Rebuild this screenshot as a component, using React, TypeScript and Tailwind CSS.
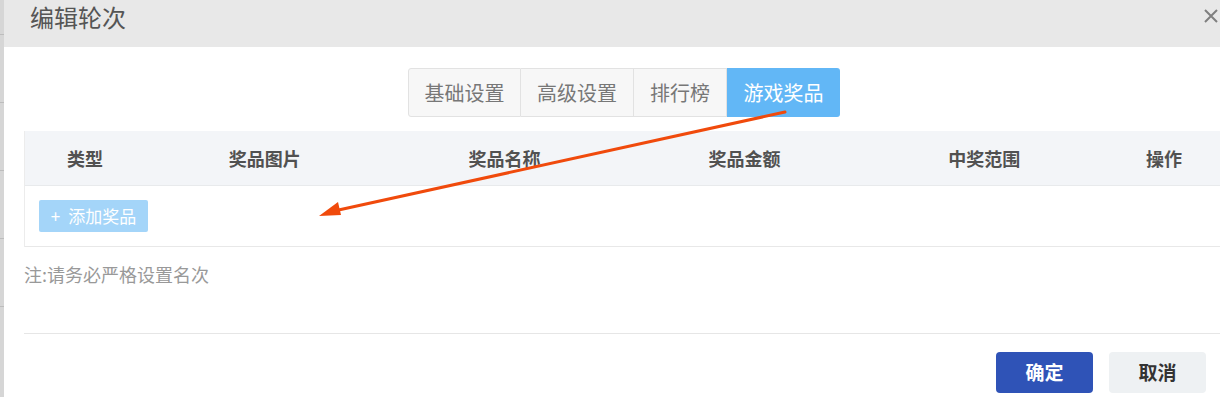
import React from "react";

const cols = [
  { label: "类型", w: "w-[120px]" },
  { label: "奖品图片", w: "w-[240px]" },
  { label: "奖品名称", w: "w-[240px]" },
  { label: "奖品金额", w: "w-[240px]" },
  { label: "中奖范围", w: "w-[240px]" },
  { label: "操作", w: "w-[120px]" },
];

export default function App() {
  return (
    <div
      className="relative flex h-[397px] w-[1220px] overflow-hidden bg-white"
      style={{ fontFamily: '"Noto Sans CJK SC", "Noto Sans", sans-serif' }}
    >
      <div className="flex w-[4px] shrink-0 flex-col bg-[#d6d6d6]">
        <div className="h-[34px]" />
        <div className="h-px bg-[#bdbdbd]" />
        <div className="h-[67px]" />
        <div className="h-px bg-[#bdbdbd]" />
        <div className="h-[67px]" />
        <div className="h-px bg-[#bdbdbd]" />
        <div className="h-[67px]" />
        <div className="h-px bg-[#bdbdbd]" />
        <div className="h-[67px]" />
        <div className="h-px bg-[#bdbdbd]" />
      </div>
      <div className="flex min-w-0 flex-1 flex-col">
        <div className="flex h-[47px] shrink-0 items-start justify-between bg-[#e8e8e8] pl-[26px] pr-[2px] pt-[3px]">
          <span className="text-[24px] leading-[28px] text-[#555]">编辑轮次</span>
          <svg width="14" height="14" viewBox="0 0 14 14" className="mt-[6px]">
            <path d="M1 1 L13 13 M13 1 L1 13" stroke="#7f7f7f" strokeWidth="2" />
          </svg>
        </div>
        <div className="flex justify-center pt-[21px] pl-[24px]">
          <div className="flex h-[49px] text-[20px] text-[#777]">
            <div className="flex w-[113px] items-center justify-center rounded-l-[3px] border border-[#e2e2e2] bg-[#f7f7f7]">基础设置</div>
            <div className="flex w-[113px] items-center justify-center border border-l-0 border-[#e2e2e2] bg-[#f7f7f7]">高级设置</div>
            <div className="flex w-[93px] items-center justify-center border border-l-0 border-[#e2e2e2] bg-[#f7f7f7]">排行榜</div>
            <div className="flex w-[113px] items-center justify-center rounded-r-[3px] bg-[#62b7f6] text-white">游戏奖品</div>
          </div>
        </div>
        <div className="ml-[20px] mt-[14px] w-[1200px] border-l border-[#ececec]">
          <div className="flex h-[55px] items-center border-b border-[#e8eaec] bg-[#f3f5f8]">
            {cols.map((c) => (
              <div key={c.label} className={`${c.w} text-center text-[18px] font-bold text-[#515151]`}>
                {c.label}
              </div>
            ))}
          </div>
          <div className="flex h-[61px] items-center border-b border-[#e8e8e8] pl-[14px]">
            <div className="flex h-[32px] w-[109px] items-center justify-center gap-[8px] rounded-[2px] bg-[#a4d5f9] text-[17px] text-white">
              <span>+</span>
              <span>添加奖品</span>
            </div>
          </div>
        </div>
        <div className="ml-[20px] mt-[14px] text-[18px] text-[#999]">注:请务必严格设置名次</div>
        <div className="ml-[20px] mt-[45px] h-px bg-[#e6e6e6]" />
        <div className="flex justify-end gap-[16px] pr-[14px] pt-[18px]">
          <div className="flex h-[41px] w-[97px] items-center justify-center rounded-[4px] bg-[#2f53b7] text-[19px] font-bold text-white">确定</div>
          <div className="flex h-[41px] w-[97px] items-center justify-center rounded-[4px] bg-[#eef1f3] text-[19px] font-bold text-[#333]">取消</div>
        </div>
      </div>
      <svg className="pointer-events-none absolute left-0 top-0" width="1220" height="397">
        <line x1="785" y1="112" x2="334" y2="211" stroke="#f04a0c" strokeWidth="3" strokeLinecap="round" />
        <polygon points="319,216 338,202 341,215" fill="#f04a0c" />
      </svg>
    </div>
  );
}
